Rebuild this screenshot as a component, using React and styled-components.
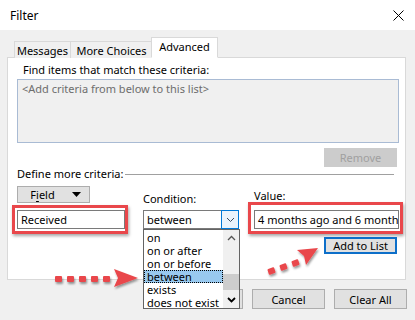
import React from "react";
import styled, { createGlobalStyle } from "styled-components";

const Global = createGlobalStyle`
  html, body {
    margin: 0;
    padding: 0;
    background: #f0f0f0;
  }
  body {
    font-family: "Noto Sans", "Open Sans", sans-serif;
    font-size: 11px;
    color: #000;
  }
`;

const Window = styled.div`
  position: relative;
  width: 415px;
  height: 320px;
  overflow: hidden;
  background: #f0f0f0;
`;

const TitleBar = styled.div`
  height: 30px;
  background: #fff;
  display: flex;
  align-items: center;
  justify-content: space-between;
  padding: 0 11px 0 10px;
  font-size: 12px;
`;

const Body = styled.div`
  padding: 7px 9px 0 7px;
`;

const TabStrip = styled.div`
  display: flex;
  align-items: flex-end;
  height: 21px;
  padding-left: 7px;
  margin-bottom: -1px;
  position: relative;
  z-index: 1;
`;

const Tab = styled.div`
  width: ${(p) => p.$w}px;
  height: ${(p) => (p.$active ? 21 : 17)}px;
  margin-left: ${(p) => (p.$active ? -2 : -1)}px;
  box-sizing: border-box;
  border: 1px solid #d9d9d9;
  border-bottom: ${(p) => (p.$active ? "1px solid #fff" : "none")};
  background: ${(p) => (p.$active ? "#fff" : "#f0f0f0")};
  display: flex;
  align-items: center;
  justify-content: center;
  padding-bottom: ${(p) => (p.$active ? 3 : 0)}px;
  &:first-child {
    margin-left: 0;
  }
`;

const Panel = styled.div`
  box-sizing: border-box;
  height: 223px;
  background: #fff;
  border: 1px solid #d9d9d9;
  position: relative;
`;

const FindLabel = styled.div`
  margin: 4px 0 0 15px;
  line-height: 16px;
`;

const CriteriaBox = styled.div`
  box-sizing: border-box;
  margin: 1px 6px 0 9px;
  height: 64px;
  background: #f0f0f0;
  border: 1px solid #a9bbd4;
  color: #6d6d6d;
  padding: 2px 4px;
  line-height: 14px;
`;

const RightRow = styled.div`
  display: flex;
  justify-content: flex-end;
  margin: ${(p) => p.$mt}px ${(p) => p.$mr}px 0 0;
`;

const Button = styled.div`
  box-sizing: border-box;
  width: 73px;
  height: ${(p) => p.$h || 20}px;
  display: flex;
  align-items: center;
  justify-content: center;
  gap: 17px;
  padding-left: ${(p) => p.$pl || 0}px;
  background: ${(p) => (p.$disabled ? "#cccccc" : "#e1e1e1")};
  color: ${(p) => (p.$disabled ? "#a0a0a0" : "#000")};
  border: ${(p) =>
    p.$focus ? "2px solid #0d6fc9" : p.$disabled ? "1px solid #cccccc" : "1px solid #adadad"};
`;

const DefineRow = styled.div`
  display: flex;
  align-items: center;
  margin: 0 11px 0 9px;
  height: 13px;
  gap: 2px;
  &::after {
    content: "";
    flex: 1;
    height: 1px;
    background: #a0a0a0;
    margin-top: 2px;
  }
`;

const CriteriaGrid = styled.div`
  display: grid;
  grid-template-columns: 108px 18px 96px 15px 145px;
  grid-template-rows: 24px 19px auto;
  margin: 6px 0 0 9px;
`;

const Cell = styled.div`
  grid-column: ${(p) => p.$col};
  grid-row: ${(p) => p.$row};
  display: flex;
  align-items: ${(p) => p.$align || "flex-start"};
  justify-content: ${(p) => p.$justify || "flex-start"};
  padding-bottom: ${(p) => p.$pb || 0}px;
  position: relative;
`;

const Label = styled.span`
  line-height: 14px;
`;

const Underlined = styled.span`
  text-decoration: underline;
  text-underline-offset: 2px;
`;

const Framed = styled.div`
  position: relative;
  width: 100%;
  &::after {
    content: "";
    position: absolute;
    top: ${(p) => p.$t}px;
    left: ${(p) => p.$l}px;
    right: ${(p) => p.$r}px;
    bottom: ${(p) => p.$b}px;
    border: 3px solid #e9474b;
    box-shadow: 1px 2px 3px rgba(0, 0, 0, 0.35);
    pointer-events: none;
  }
`;

const TextInput = styled.div`
  box-sizing: border-box;
  height: 19px;
  width: 100%;
  background: #fff;
  border: 1px solid #7a7a7a;
  padding: 0 3px;
  display: flex;
  align-items: center;
  white-space: nowrap;
  overflow: hidden;
`;

const Combo = styled.div`
  box-sizing: border-box;
  height: 19px;
  width: 100%;
  background: #fff;
  border: 1px solid #7a7a7a;
  display: flex;
  align-items: stretch;
  position: relative;
`;

const ComboText = styled.div`
  flex: 1;
  padding: 0 3px;
  display: flex;
  align-items: center;
`;

const ComboButton = styled.div`
  box-sizing: border-box;
  width: 18px;
  background: #eaf3fc;
  border: 1px solid #0078d7;
  margin: -1px -1px -1px 0;
  display: flex;
  align-items: center;
  justify-content: center;
`;

const DropList = styled.div`
  position: absolute;
  top: calc(100% + 1px);
  left: -1px;
  width: 97px;
  height: 80px;
  box-sizing: border-box;
  background: #fff;
  border: 1px solid #646464;
  display: flex;
  z-index: 5;
`;

const Options = styled.div`
  flex: 1;
  display: flex;
  flex-direction: column;
  padding-top: 1px;
`;

const Option = styled.div`
  box-sizing: border-box;
  height: 13px;
  line-height: 11px;
  padding-left: 2px;
  white-space: nowrap;
  background: ${(p) => (p.$selected ? "#99c9ef" : "transparent")};
  border: 1px dotted ${(p) => (p.$selected ? "#000" : "transparent")};
`;

const Scrollbar = styled.div`
  width: 16px;
  background: #f0f0f0;
  display: flex;
  flex-direction: column;
  align-items: center;
`;

const ScrollArrow = styled.div`
  height: 16px;
  display: flex;
  align-items: center;
  justify-content: center;
`;

const Track = styled.div`
  flex: 1;
  width: 100%;
  display: flex;
  flex-direction: column;
  justify-content: flex-end;
`;

const Thumb = styled.div`
  width: 100%;
  height: 16px;
  background: #cdcdcd;
  margin-bottom: 2px;
`;

const BottomRow = styled.div`
  display: flex;
  justify-content: flex-end;
  gap: 9px;
  margin-top: 9px;
  margin-right: -1px;
`;

const Overlay = styled.svg`
  position: absolute;
  left: 0;
  top: 0;
  pointer-events: none;
  z-index: 10;
`;

const Chevron = ({ up, color = "#000", w = 1.3 }) => (
  <svg width="9" height="6" viewBox="0 0 9 6">
    <path
      d={up ? "M1 5 L4.5 1.5 L8 5" : "M1 1 L4.5 4.5 L8 1"}
      fill="none"
      stroke={color}
      strokeWidth={w}
    />
  </svg>
);

const Arrows = () => (
  <Overlay width="415" height="320" viewBox="0 0 415 320">
    <defs>
      <filter id="sh" x="-20%" y="-40%" width="140%" height="180%">
        <feGaussianBlur in="SourceAlpha" stdDeviation="1.2" />
        <feOffset dx="1" dy="2" />
        <feComponentTransfer>
          <feFuncA type="linear" slope="0.4" />
        </feComponentTransfer>
        <feMerge>
          <feMergeNode />
          <feMergeNode in="SourceGraphic" />
        </feMerge>
      </filter>
    </defs>
    <g fill="#e9474b" filter="url(#sh)">
      {[55, 67, 79, 91, 103].map((x) => (
        <rect key={x} x={x} y={276} width="7" height="6" rx="1" />
      ))}
      <polygon points="114,269 138,278 114,287 118,278" />
      {[
        [268, 268],
        [280, 264],
        [292, 260],
      ].map(([x, y]) => (
        <rect
          key={x}
          x={x}
          y={y}
          width="7"
          height="6"
          rx="1"
          transform={`rotate(-18 ${x + 3.5} ${y + 3})`}
        />
      ))}
      <polygon points="297,250 318,248 306,265 304,256" />
    </g>
  </Overlay>
);

const options = ["on", "on or after", "on or before", "between", "exists", "does not exist"];

export default function App() {
  return (
    <Window>
      <Global />
      <TitleBar>
        <span>Filter</span>
        <svg width="11" height="11" viewBox="0 0 11 11">
          <path d="M0.5 0.5 L10.5 10.5 M10.5 0.5 L0.5 10.5" stroke="#000" strokeWidth="1" />
        </svg>
      </TitleBar>
      <Body>
        <TabStrip>
          <Tab $w={57}>Messages</Tab>
          <Tab $w={83}>More Choices</Tab>
          <Tab $w={67} $active>
            Advanced
          </Tab>
        </TabStrip>
        <Panel>
          <FindLabel>Find items that match these criteria:</FindLabel>
          <CriteriaBox>&lt;Add criteria from below to this list&gt;</CriteriaBox>
          <RightRow $mt={5} $mr={8}>
            <Button $disabled $h={19}>
              Remove
            </Button>
          </RightRow>
          <DefineRow>Define more criteria:</DefineRow>
          <CriteriaGrid>
            <Cell $col={1} $row={1}>
              <Button $h={17} $pl={4}>
                <span>
                  F<Underlined>i</Underlined>eld
                </span>
                <svg width="9" height="5" viewBox="0 0 9 5">
                  <polygon points="0,0 9,0 4.5,5" fill="#000" />
                </svg>
              </Button>
            </Cell>
            <Cell $col={3} $row={1} $align="flex-end" $pb={4}>
              <Label>Condition:</Label>
            </Cell>
            <Cell $col={5} $row={1} $align="flex-end" $pb={7}>
              <Label>Value:</Label>
            </Cell>
            <Cell $col={1} $row={2}>
              <Framed $t={-5} $l={-5} $r={-3} $b={-5}>
                <TextInput>Received</TextInput>
              </Framed>
            </Cell>
            <Cell $col={3} $row={2}>
              <Combo>
                <ComboText>between</ComboText>
                <ComboButton>
                  <Chevron color="#3c4a5c" w={1} />
                </ComboButton>
                <DropList>
                  <Options>
                    {options.map((o) => (
                      <Option key={o} $selected={o === "between"}>
                        {o}
                      </Option>
                    ))}
                  </Options>
                  <Scrollbar>
                    <ScrollArrow>
                      <Chevron up color="#555" />
                    </ScrollArrow>
                    <Track>
                      <Thumb />
                    </Track>
                    <ScrollArrow>
                      <Chevron color="#000" w={1.8} />
                    </ScrollArrow>
                  </Scrollbar>
                </DropList>
              </Combo>
            </Cell>
            <Cell $col={5} $row={2}>
              <Framed $t={-8} $l={-6} $r={-4} $b={-5}>
                <TextInput>4 months ago and 6 months ago</TextInput>
              </Framed>
            </Cell>
            <Cell $col={5} $row={3} $justify="flex-end">
              <RightRow $mt={8} $mr={2}>
                <Button $focus $h={17}>
                  Add to List
                </Button>
              </RightRow>
            </Cell>
          </CriteriaGrid>
        </Panel>
        <BottomRow>
          <Button>OK</Button>
          <Button>Cancel</Button>
          <Button>Clear All</Button>
        </BottomRow>
      </Body>
      <Arrows />
    </Window>
  );
}
